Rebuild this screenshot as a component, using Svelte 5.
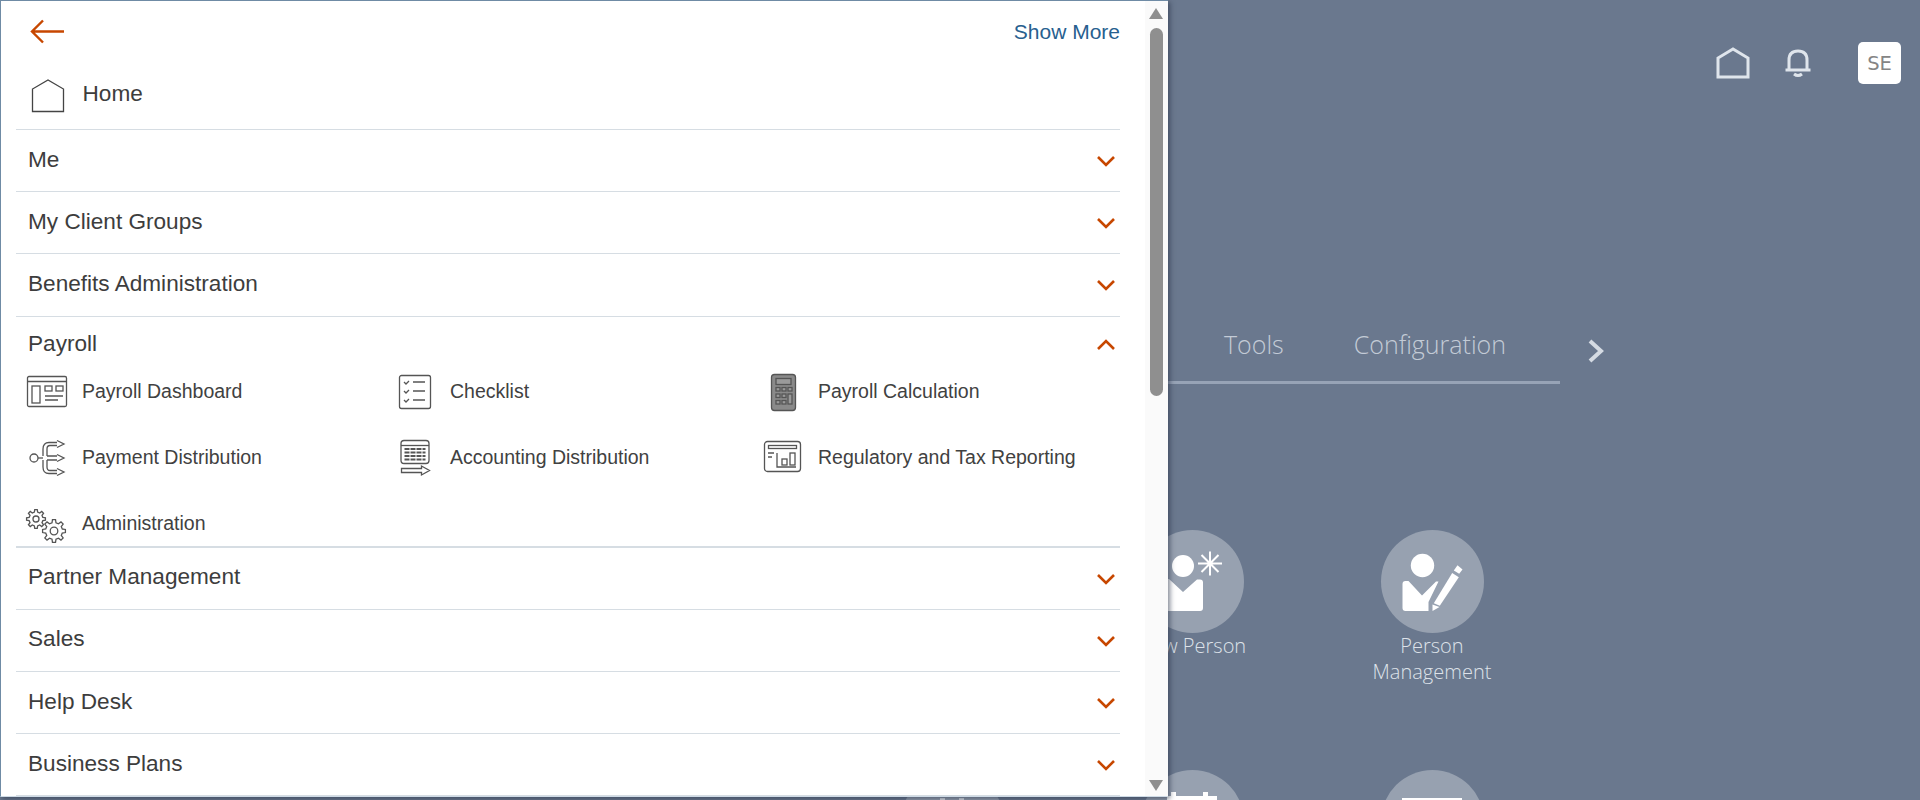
<script>
  const topRows = ["Me", "My Client Groups", "Benefits Administration"];
  const bottomRows = ["Partner Management", "Sales", "Help Desk", "Business Plans"];
  const payrollItems = [
    { label: "Payroll Dashboard", icon: "dashboard" },
    { label: "Checklist", icon: "checklist" },
    { label: "Payroll Calculation", icon: "calculator" },
    { label: "Payment Distribution", icon: "distribution" },
    { label: "Accounting Distribution", icon: "accounting" },
    { label: "Regulatory and Tax Reporting", icon: "reporting" },
    { label: "Administration", icon: "gears" },
  ];

  // toothed outline, one trapezoid per tooth
  function gearPath(cx, cy, r) {
    const teeth = 8;
    const root = r * 0.74;
    const pts = [];
    for (let i = 0; i < teeth; i++) {
      const a = (i / teeth) * Math.PI * 2;
      const step = (Math.PI * 2) / teeth;
      [[root, -0.3], [r, -0.17], [r, 0.17], [root, 0.3]].forEach(([rad, off]) => {
        const t = a + off * step;
        pts.push((cx + rad * Math.cos(t)).toFixed(2) + " " + (cy + rad * Math.sin(t)).toFixed(2));
      });
    }
    return "M" + pts.join(" L") + " Z";
  }
</script>

{#snippet chevron(up)}
  <svg class="chevron" width="20" height="12" viewBox="0 0 20 12">
    <path d={up ? "M2 10 L10 2 L18 10" : "M2 2 L10 10 L18 2"} />
  </svg>
{/snippet}

{#snippet itemIcon(name)}
  <svg class="item-icon" width="44" height="36" viewBox="0 0 44 36">
    {#if name === "dashboard"}
      <rect x="1.5" y="2.5" width="39" height="30" rx="1.5" />
      <path d="M1.5 7.5 H40.5" />
      <rect x="6" y="12" width="8" height="17" />
      <rect x="19" y="12" width="7" height="5" /><rect x="30" y="12" width="7" height="5" />
      <path d="M19 22 H37 M19 26 H32" />
    {:else if name === "checklist"}
      <rect x="5.5" y="1.5" width="31" height="33" rx="2" />
      <path d="M10 8 l2 2 l3 -3 M10 17 l2 2 l3 -3 M10 26 l2 2 l3 -3" />
      <path d="M19 8 H31 M19 17 H31 M19 26 H31" />
    {:else if name === "calculator"}
      <rect x="9.5" y="0.5" width="24" height="36" rx="3" fill="#8a8a8a" />
      <rect x="14" y="4.5" width="15" height="6" fill="#9a9a9a" />
      <g fill="#9a9a9a">
        <rect x="14" y="13.5" width="4" height="3.5" /><rect x="20" y="13.5" width="4" height="3.5" /><rect x="26" y="13.5" width="4" height="3.5" />
        <rect x="14" y="20" width="4" height="3.5" /><rect x="20" y="20" width="4" height="3.5" /><rect x="26" y="20" width="4" height="10" />
        <rect x="14" y="26.5" width="4" height="3.5" /><rect x="20" y="26.5" width="4" height="3.5" />
      </g>
    {:else if name === "distribution"}
      <circle cx="8" cy="18" r="4" />
      <path d="M12 18 H17" />
      <path d="M17 16 V9 Q17 2.5 23 2.5 H31 M21 16 V9 Q21 5.5 24 5.5 H31" />
      <path d="M17 20 V27 Q17 33.5 23 33.5 H31 M21 20 V27 Q21 30.5 24 30.5 H31" />
      <path d="M21 16 H31 M21 20 H31" />
      <path d="M31 0.5 L38 4 L31 7.5 M31 14.5 L38 18 L31 21.5 M31 28.5 L38 32 L31 35.5" />
    {:else if name === "accounting"}
      <rect x="7" y="0.5" width="28" height="23" rx="3" />
      <path d="M7 5.5 H35" />
      <path class="thick" d="M10.5 9 H31.5 M10.5 12.5 H31.5 M10.5 16 H31.5 M10.5 19.5 H31.5" stroke-dasharray="5 1" />
      <path d="M7.5 28.5 H27.5 V26 L35.5 30.5 L27.5 35 V32.5 H7.5 Z" />
    {:else if name === "reporting"}
      <rect x="2.5" y="1.5" width="36" height="30" rx="3" />
      <rect x="6.5" y="5.5" width="28" height="3" />
      <path d="M6 13 H12 M6 17 H10" />
      <path d="M15 13 V27 H34" />
      <rect x="20" y="19" width="5" height="6" /><rect x="28" y="13" width="5" height="12" />
    {:else if name === "gears"}
      <path d={gearPath(10, 13, 9.5)} /><circle cx="10" cy="13" r="3" />
      <path d={gearPath(28, 25, 11.5)} /><circle cx="28" cy="25" r="3.8" />
    {/if}
  </svg>
{/snippet}

<div class="page">
  <header class="top">
    <svg class="home" width="34" height="32" viewBox="0 0 34 32">
      <path d="M2 30 V11 L17 2 L32 11 V30 Z" />
    </svg>
    <svg class="bell" width="28" height="30" viewBox="0 0 28 30">
      <path d="M5 22 V12 Q5 3 14 3 Q23 3 23 12 V22" />
      <path d="M1.5 22 H26.5" />
      <path d="M10 26 Q14 29 18 26" />
    </svg>
    <div class="avatar">SE</div>
  </header>

  <nav class="tabs">
    <div class="tab-strip">
      <span>Tools</span>
      <span>Configuration</span>
    </div>
    <svg class="next" width="18" height="26" viewBox="0 0 18 26">
      <path d="M3 3 L14 13 L3 23" />
    </svg>
  </nav>

  <section class="tiles">
    <div class="tile">
      <div class="circle">
        <svg width="103" height="103" viewBox="0 0 103 103">
          <circle cx="42" cy="36" r="11" fill="#fff" />
          <path d="M22 52 q0 -3 3 -3 h3 L42 62 L56 49.5 h3 q3 0 3 3 V78 q0 3 -3 3 H25 q-3 0 -3 -3 Z" fill="#fff" />
          <path d="M69 21.5 V45.5 M57 33.5 H81 M60.5 25 L77.5 42 M77.5 25 L60.5 42" stroke="#fff" stroke-width="2" />
        </svg>
      </div>
      <span>New Person</span>
    </div>
    <div class="tile">
      <div class="circle">
        <svg width="103" height="103" viewBox="0 0 103 103">
          <circle cx="41.5" cy="35.5" r="11.7" fill="#fff" />
          <path d="M21.5 54 q0 -3 3 -3 h3 L41 65.5 L55 51.5 h2.5 L47.5 72 V81 H24.5 q-3 0 -3 -3 Z" fill="#fff" />
          <path d="M76.5 35.2 L81.5 39.5 L78.2 43.8 L72.8 40.5 Z" fill="#fff" />
          <path d="M71.2 43 L77.8 47.2 L58.8 75.8 L52.8 73.3 Z" fill="#fff" />
          <path d="M51.5 74.5 L58.5 77 L51.5 81 Z" fill="#fff" />
        </svg>
      </div>
      <span>Person Management</span>
    </div>
  </section>
  <section class="tiles second">
    <div class="tile">
      <div class="circle">
        <div class="stub pegs"></div>
      </div>
    </div>
    <div class="tile">
      <div class="circle">
        <div class="stub calendar"></div>
      </div>
    </div>
    <div class="tile">
      <div class="circle">
        <div class="stub sheet"></div>
      </div>
    </div>
  </section>
</div>

<aside class="panel">
  <div class="content">
    <div class="head">
      <svg class="back" width="36" height="26" viewBox="0 0 36 26">
        <path d="M34 12.5 H2 M13 1.5 L2 12.5 L13 23.5" />
      </svg>
      <a href="#more">Show More</a>
    </div>

    <div class="home-row">
      <svg width="36" height="34" viewBox="0 0 36 34">
        <path d="M2.5 32.5 V10 L18 1 L33.5 10 V32.5 Z" />
      </svg>
      <span>Home</span>
    </div>

    {#each topRows as row}
      <div class="row"><span>{row}</span>{@render chevron(false)}</div>
    {/each}

    <div class="payroll">
      <div class="row open"><span>Payroll</span>{@render chevron(true)}</div>
      <div class="items">
        {#each payrollItems as item}
          <div class="item">
            {@render itemIcon(item.icon)}
            <span>{item.label}</span>
          </div>
        {/each}
      </div>
    </div>

    {#each bottomRows as row}
      <div class="row"><span>{row}</span>{@render chevron(false)}</div>
    {/each}
  </div>

  <div class="scrollbar">
    <div class="arrow up"></div>
    <div class="thumb"></div>
    <div class="arrow down"></div>
  </div>
</aside>

<style>
  :global(body) {
    margin: 0;
    overflow: hidden;
  }

  .page {
    height: 800px;
    background: #6a788e;
    color: #d9dfe7;
    font-family: "Open Sans", "Liberation Sans", sans-serif;
    font-weight: 300;
    overflow: hidden;
  }

  .top {
    display: flex;
    justify-content: flex-end;
    align-items: center;
    height: 44px;
    padding: 41px 19px 0 0;
  }

  .home {
    margin-right: 34px;
  }

  .top svg path {
    fill: none;
    stroke: #dfe5ec;
    stroke-width: 3;
  }

  .bell {
    margin-right: 46px;
  }

  .avatar {
    width: 43px;
    height: 42px;
    border-radius: 5px;
    background: #fff;
    color: #858585;
    font-family: "DejaVu Sans", sans-serif;
    font-size: 19.5px;
    font-weight: 400;
    display: flex;
    align-items: center;
    justify-content: center;
  }

  .tabs {
    display: flex;
    margin: 239px 0 0 1150px;
  }

  .tab-strip {
    display: flex;
    width: 410px;
    height: 60px;
    padding-left: 74px;
    box-sizing: border-box;
    gap: 70px;
    font-size: 25px;
    line-height: 40px;
    color: #c3cbd6;
    border-bottom: 3px solid #97a3b6;
  }

  .next {
    margin: 14px 0 0 27px;
  }

  .next path {
    fill: none;
    stroke: #d5dbe3;
    stroke-width: 4;
  }

  .tiles {
    display: grid;
    grid-template-columns: repeat(2, 240px);
    margin: 146px 0 0 1072px;
  }

  .tiles.second {
    grid-template-columns: repeat(3, 240px);
    margin: 0 0 0 832px;
  }

  .second .tile {
    height: auto;
  }

  .tile {
    height: 240px;
    display: flex;
    flex-direction: column;
    align-items: center;
    font-size: 20px;
    line-height: 26px;
    text-align: center;
    color: #dde2e9;
  }

  .tile span {
    width: 130px;
  }

  .circle {
    width: 103px;
    height: 103px;
    border-radius: 50%;
    background: #97a1b0;
    display: flex;
    justify-content: center;
  }

  .circle svg {
    display: block;
  }

  .stub {
    margin-top: 28px;
    height: 30px;
    background: #fff;
  }

  .stub.pegs {
    width: 24px;
    background: linear-gradient(90deg, #dfe3e8 0 5px, transparent 5px 19px, #dfe3e8 19px);
  }

  .stub.calendar {
    width: 50px;
    margin-top: 22px;
    background:
      linear-gradient(#fff, #fff) 0 4px / 100% 100% no-repeat,
      linear-gradient(#fff, #fff) 4px 0 / 5px 10px no-repeat,
      linear-gradient(#fff, #fff) 36px 0 / 5px 10px no-repeat;
  }

  .stub.sheet {
    width: 60px;
  }

  .panel {
    position: absolute;
    top: 0;
    left: 0;
    width: 1168px;
    height: 797px;
    box-sizing: border-box;
    display: flex;
    background: #fff;
    border-top: 1px solid #6f8ba5;
    border-left: 1px solid #6f8ba5;
    border-bottom: 1px solid #cfdbe6;
    box-shadow: 2px 2px 5px rgba(40, 50, 70, 0.6);
    font-family: "Liberation Sans", Arial, sans-serif;
    color: #3d3d3d;
    overflow: hidden;
  }

  .content {
    flex: 1;
    padding: 0 25px 0 15px;
    min-width: 0;
  }

  .head {
    display: flex;
    justify-content: space-between;
    height: 62px;
  }

  .back {
    margin: 18px 0 0 14px;
  }

  .back path {
    fill: none;
    stroke: #c74700;
    stroke-width: 2.4;
  }

  .head a {
    margin-top: 19px;
    font-size: 21px;
    line-height: 24px;
    color: #27608f;
    text-decoration: none;
  }

  .home-row {
    display: flex;
    align-items: flex-start;
    gap: 16.5px;
    height: 67px;
    padding: 17px 0 0 14px;
    box-sizing: border-box;
    border-bottom: 1px solid #d6dde3;
    font-size: 22.6px;
    line-height: 28px;
  }

  .home-row svg {
    margin-top: -1px;
  }

  .home-row path {
    fill: #fff;
    stroke: #444;
    stroke-width: 1.3;
  }

  .row {
    display: flex;
    justify-content: space-between;
    align-items: center;
    height: 62.2px;
    padding: 0 4px 2px 12px;
    box-sizing: border-box;
    border-bottom: 1px solid #d6dde3;
    font-size: 22.6px;
  }

  .row.open {
    height: 46px;
    padding-top: 10px;
    border-bottom: none;
  }

  .chevron {
    margin-top: 3px;
  }

  .chevron path {
    fill: none;
    stroke: #c74700;
    stroke-width: 2.6;
  }

  .payroll {
    height: 231px;
    box-sizing: border-box;
    border-bottom: 2px solid #d6dde3;
    overflow: hidden;
  }

  .items {
    display: grid;
    grid-template-columns: repeat(3, 368px);
    grid-auto-rows: 66px;
    padding-top: 7px;
  }

  .item {
    display: flex;
    align-items: center;
    height: 44px;
    gap: 12px;
    padding-left: 10px;
    font-size: 19.5px;
    color: #414141;
  }

  .item-icon {
    flex: none;
    fill: none;
    stroke: #555;
    stroke-width: 1.3;
    overflow: visible;
  }

  .item-icon .thick {
    stroke-width: 2;
  }

  .scrollbar {
    flex: none;
    width: 23px;
    background: #fafafa;
    position: relative;
  }

  .thumb {
    position: absolute;
    top: 27px;
    left: 5px;
    width: 13px;
    height: 368px;
    border-radius: 7px;
    background: #8f8f8f;
  }

  .arrow {
    position: absolute;
    left: 4px;
    width: 0;
    height: 0;
    border-left: 7.5px solid transparent;
    border-right: 7.5px solid transparent;
  }

  .arrow.up {
    top: 7px;
    border-bottom: 11px solid #8f8f8f;
  }

  .arrow.down {
    bottom: 5px;
    border-top: 11px solid #8f8f8f;
  }
</style>
